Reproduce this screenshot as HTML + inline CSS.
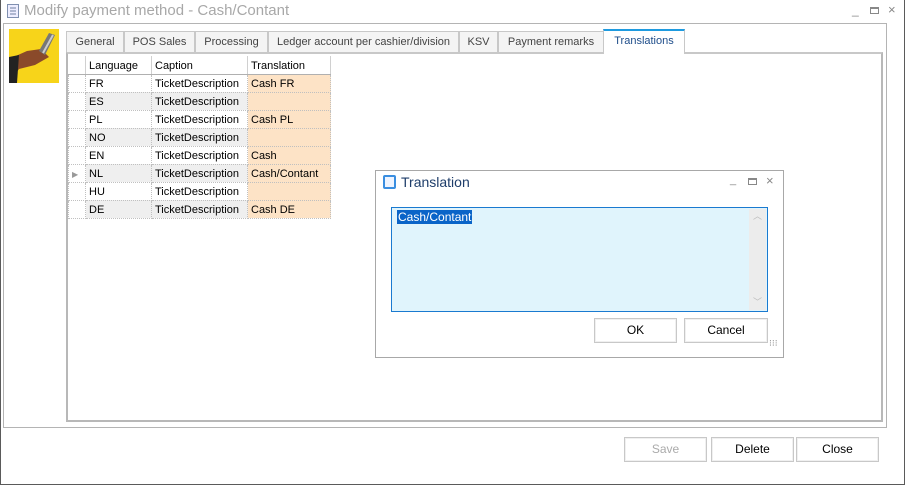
<!DOCTYPE html>
<html><head><style>
*{box-sizing:border-box;margin:0;padding:0}
body{width:905px;height:485px;background:#fff;font-family:"Liberation Sans",sans-serif;font-size:11px;color:#000;position:relative;overflow:hidden}
.abs{position:absolute}
.win{left:0;top:0;width:905px;height:485px;border:1px solid #5a5a5a;border-top:none}
.title{left:24px;top:2px;font-size:15px;color:#a8a8a8}
.inner{left:3px;top:23px;width:884px;height:405px;border:1px solid #b4b4b4}
.tab{top:31px;height:22px;border:1px solid #c8c8c8;background:#f4f4f4;color:#444;text-align:center;line-height:20px;font-size:11px}
.content{left:66px;top:52px;width:817px;height:370px;border:2px solid #b8b8b8;border-top-color:#c8c8c8}
table{border-collapse:collapse;position:absolute;left:68px;top:56px}
td{height:18px;border:1px dotted #c0c0c0;padding:2px 0 0 3px;font-size:11px;white-space:nowrap;vertical-align:middle}
tr.h td{border:none;border-right:1px solid #d0d0d0;border-bottom:1px solid #b0b0b0;height:18px}
td.t{background:#fde3c6}
tr.g td.l,tr.g td.c{background:#efefef}
.btn{height:25px;border:1px solid #c8c8c8;background:#fff;box-shadow:inset 0 0 0 1px #f0f0f0;text-align:center;line-height:23px;font-size:12px}
</style></head><body>
<div class="abs win"></div>
<svg class="abs" style="left:6px;top:3px" width="14" height="16"><rect x="1.5" y="1.5" width="11" height="13" fill="#eef" stroke="#8090b0"/><path d="M4 5h6M4 8h6M4 11h6" stroke="#7080a0"/></svg>
<div class="abs title">Modify payment method - Cash/Contant</div>
<div class="abs" style="left:852px;top:3px;color:#888;font-size:12px">_</div>
<div class="abs" style="left:870px;top:7px;width:9px;height:7px;border:1px solid #888;border-top-width:2px"></div>
<div class="abs" style="left:888px;top:2px;color:#888;font-size:13px">×</div>
<div class="abs inner"></div>
<svg class="abs" style="left:9px;top:29px" width="50" height="54"><rect width="50" height="54" fill="#f7d41a"/><path d="M0 30 L18 22 L32 20 L40 28 L26 36 L10 40 L0 54Z" fill="#8a4a2a"/><path d="M0 28 L10 26 L8 54 L0 54Z" fill="#222"/><path d="M30 22 L40 4 L46 6 L36 26Z" fill="#777"/><path d="M34 24 L44 6" stroke="#ccc" stroke-width="2"/></svg>
<div class="abs tab" style="left:66px;width:58px">General</div>
<div class="abs tab" style="left:124px;width:71px">POS Sales</div>
<div class="abs tab" style="left:195px;width:73px">Processing</div>
<div class="abs tab" style="left:268px;width:191px">Ledger account per cashier/division</div>
<div class="abs tab" style="left:459px;width:39px">KSV</div>
<div class="abs tab" style="left:498px;width:106px">Payment remarks</div>
<div class="abs content"></div>
<div class="abs tab" style="left:603px;top:29px;height:25px;width:82px;background:#fff;border-top:2px solid #1e9be0;border-bottom:none;color:#1e4d8a;line-height:21px">Translations</div>
<table>
<tr class="h"><td style="width:17px"></td><td style="width:66px">Language</td><td style="width:96px">Caption</td><td style="width:83px">Translation</td></tr>
<tr><td></td><td class="l">FR</td><td class="c">TicketDescription</td><td class="t">Cash FR</td></tr>
<tr class="g"><td></td><td class="l">ES</td><td class="c">TicketDescription</td><td class="t"></td></tr>
<tr><td></td><td class="l">PL</td><td class="c">TicketDescription</td><td class="t">Cash PL</td></tr>
<tr class="g"><td></td><td class="l">NO</td><td class="c">TicketDescription</td><td class="t"></td></tr>
<tr><td></td><td class="l">EN</td><td class="c">TicketDescription</td><td class="t">Cash</td></tr>
<tr class="g"><td style="color:#999;font-size:8px">▶</td><td class="l">NL</td><td class="c">TicketDescription</td><td class="t">Cash/Contant</td></tr>
<tr><td></td><td class="l">HU</td><td class="c">TicketDescription</td><td class="t"></td></tr>
<tr class="g"><td></td><td class="l">DE</td><td class="c">TicketDescription</td><td class="t">Cash DE</td></tr>
</table>
<div class="abs btn" style="left:624px;top:437px;width:83px;color:#aaa">Save</div>
<div class="abs btn" style="left:711px;top:437px;width:83px">Delete</div>
<div class="abs btn" style="left:796px;top:437px;width:83px">Close</div>
<div class="abs" style="left:375px;top:170px;width:409px;height:188px;border:1px solid #a8a8a8;background:#fff"></div>
<div class="abs" style="left:383px;top:175px;width:13px;height:14px;border:2px solid #3a8ee0;border-radius:2px;background:#eef4ff"></div>
<div class="abs" style="left:401px;top:174px;font-size:14px;color:#1e3d6a">Translation</div>
<div class="abs" style="left:730px;top:174px;color:#888">_</div>
<div class="abs" style="left:748px;top:178px;width:9px;height:7px;border:1px solid #888;border-top-width:2px"></div>
<div class="abs" style="left:766px;top:173px;color:#888;font-size:13px">×</div>
<div class="abs" style="left:391px;top:207px;width:377px;height:105px;border:1px solid #1a7ad0;background:#e0f4fc"></div>
<div class="abs" style="left:749px;top:209px;width:17px;height:101px;background:#ececec;color:#bbb;font-size:9px;text-align:center">︿<div style="position:absolute;bottom:2px;width:17px">﹀</div></div>
<div class="abs" style="left:397px;top:210px;background:#0a64c8;color:#fff;font-size:12px;line-height:14px;padding:0 1px">Cash/Contant</div>
<div class="abs btn" style="left:594px;top:318px;width:83px">OK</div>
<div class="abs btn" style="left:684px;top:318px;width:84px">Cancel</div>
<div class="abs" style="left:769px;top:341px;color:#888;font-size:9px;line-height:5px">⁝⁝⁝</div>
</body></html>
